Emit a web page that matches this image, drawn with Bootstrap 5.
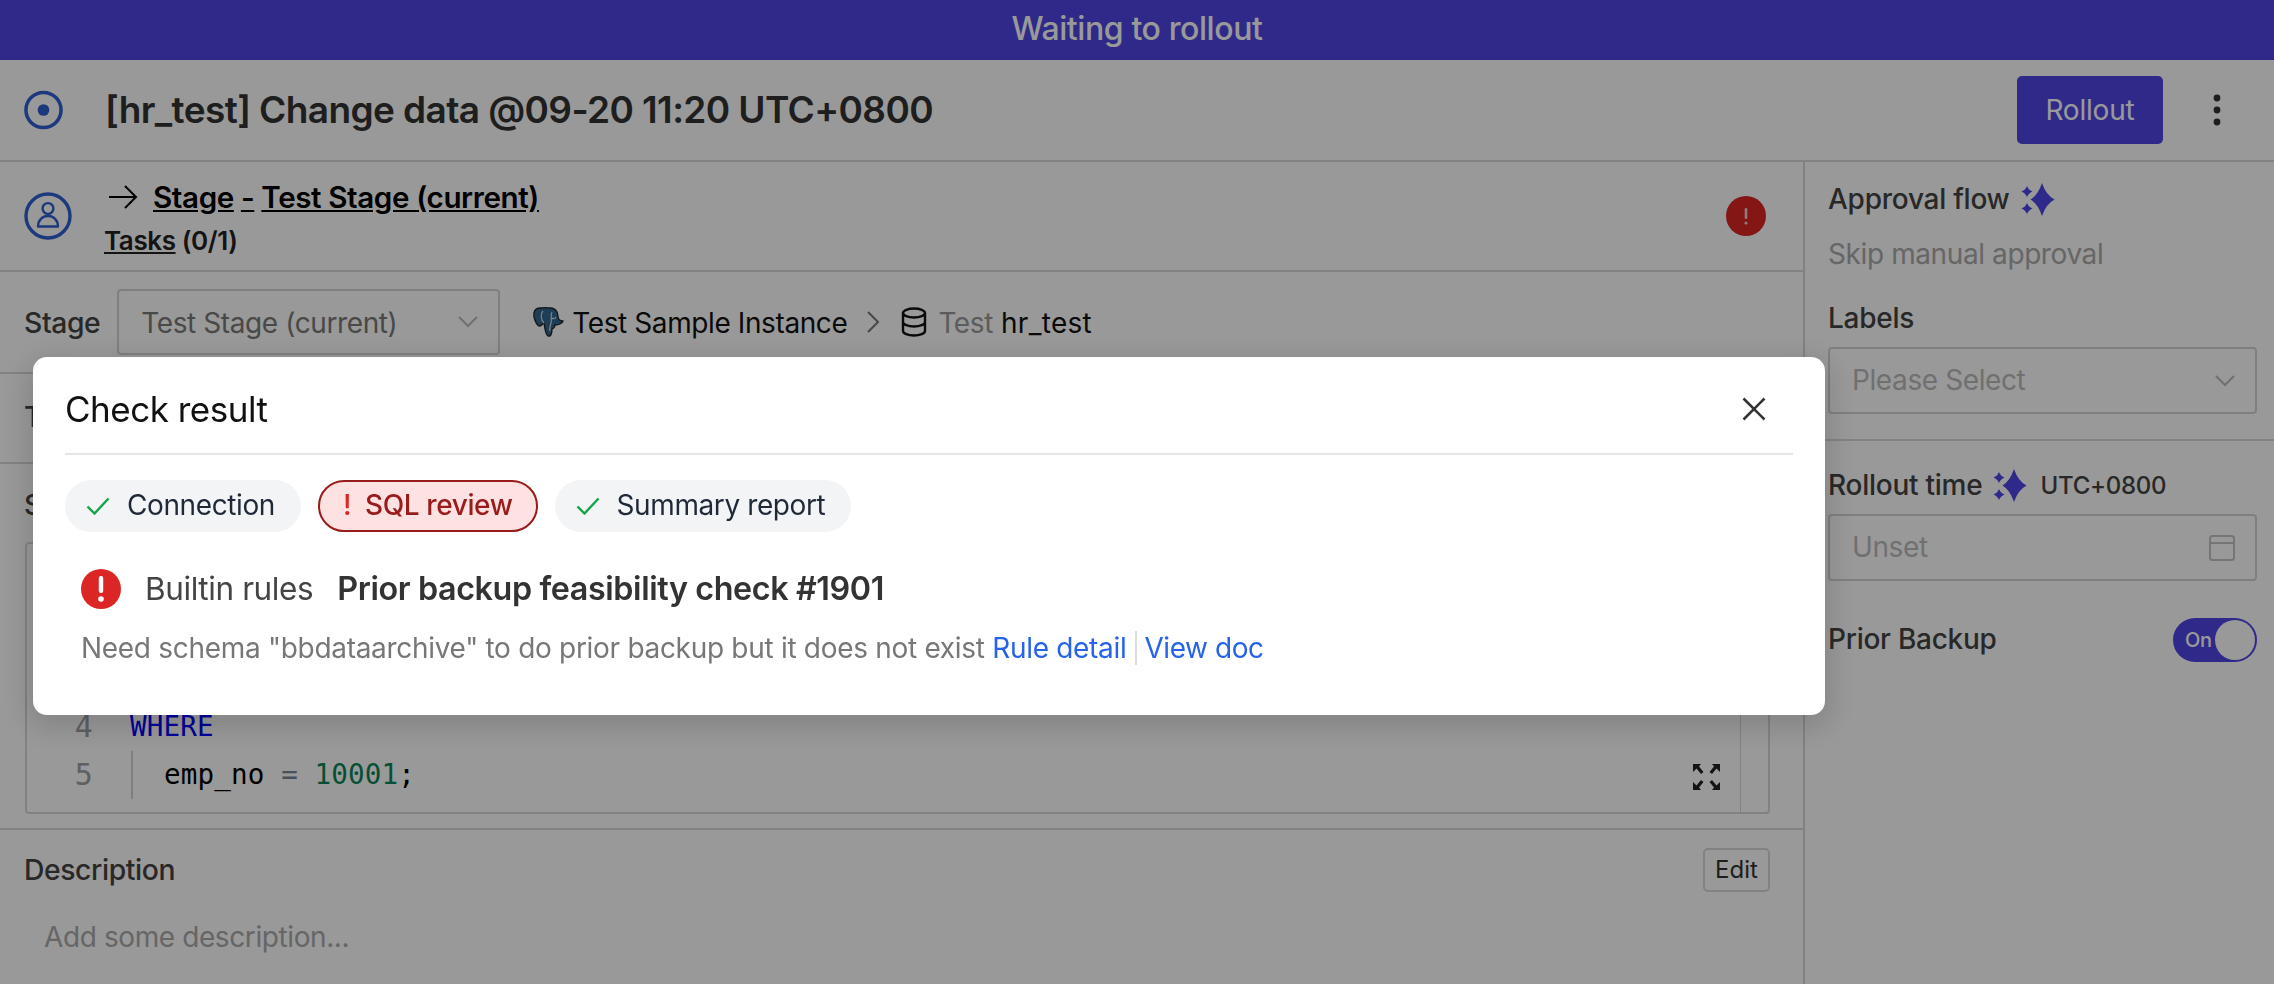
<!DOCTYPE html>
<html lang="en">
<head>
<meta charset="utf-8">
<title>Check result</title>
<link href="https://cdn.jsdelivr.net/npm/bootstrap@5.3.0/dist/css/bootstrap.min.css" rel="stylesheet">
<style>
html,body{height:100%;}
body{font-family:Inter,"Liberation Sans",sans-serif;font-size:28px;letter-spacing:-.4px;color:#3a3a3a;background:#fff;overflow:hidden;line-height:1.4;}
.shell{height:984px;}
.rollout-banner{height:60px;background:#4f46e5;color:#fff;font-size:32px;font-weight:500;padding-bottom:2px;}
.issue-head{height:102px;padding:0 45px 0 24px;border-bottom:2px solid #d9d9d9;}
.issue-title{font-size:37px;font-weight:600;letter-spacing:-.6px;margin:0 0 0 42px;color:#333;white-space:nowrap;}
.btn-rollout{width:146px;height:68px;background:#4f46e5;color:#fff;font-size:28px;letter-spacing:-.2px;border:0;border-radius:5px;padding:0;}
.btn-rollout:hover{background:#4f46e5;color:#fff;}
.dots-wrap{margin:0 0 0 42px;width:24px;}
.main-col{width:1803px;flex:none;}
.side-col{border-left:2px solid #d9d9d9;flex:1;padding:0 17px 0 23px;}
.row-stage{height:110px;padding:0 37px 0 24px;border-bottom:2px solid #d9d9d9;}
.stage-title{font-size:29.6px;font-weight:600;color:#000;line-height:38px;margin-left:4px;gap:15px;}
.stage-title a{color:#000;}
.stage-tasks{font-size:26px;font-weight:600;color:#222;line-height:38px;margin-top:6px;}
.stage-tasks a{color:#222;}
.stage-body{margin-left:32px;margin-top:6px;}
.row-picker{height:102px;padding:0 24px;border-bottom:2px solid #d9d9d9;}
.row-picker span{padding-top:3px;}
.field-label{font-weight:500;color:#444;font-size:28.300px;}
.picker-box{width:383px;height:66px;border:2px solid #d1d5db;border-radius:4px;padding:0 20px 0 22px;color:#7a7a7a;background:#fff;margin:0 32px 0 17px;}
.picker-box.wide{width:100%;margin:0;height:67px;color:#bbb;}
.instance-name{color:#111;margin-left:8px;}
.crumb-sep{margin:0 21px 0 19px;}
.muted-word{color:#999;margin-left:11px;}
.dark-word{color:#111;margin-left:8px;letter-spacing:.3px;}
.row-tasks{height:90px;padding:0 24px;border-bottom:2px solid #d9d9d9;}
.row-statement{height:366px;padding:22px 33px 0 24px;border-bottom:2px solid #d9d9d9;}
.code-box{height:272px;margin:16px 0 0 1px;border:2px solid #d9d9d9;border-radius:4px;padding-top:15px;}
.code-line{height:48px;font-family:"DejaVu Sans Mono","Liberation Mono",monospace;font-size:27.6px;letter-spacing:.12px;color:#000;line-height:48px;}
.line-no{width:103px;flex:none;text-align:right;padding-right:37px;color:#a0a0a0;font-size:30px;}
.line-code{white-space:pre;}
.line-indent{border-left:2px solid #d4d4d4;padding-left:31px;margin-left:1px;}
.kw{color:#0000ff;}.num{color:#098658;}.op{color:#778899;}
.code-rail{width:28px;border-left:1px solid #d9d9d9;flex:none;}
.code-area{min-width:0;}
.expand-icon{position:absolute;right:48px;bottom:22px;}
.row-desc{padding:18px 33px 0 24px;}
.row-desc .field-label{padding-top:1px;}
.btn-edit{width:67px;height:44px;font-size:24px;border:2px solid #d9d9d9;border-radius:5px;color:#333;padding:0;background:#fff;}
.desc-empty{color:#aaa;padding-left:20px;margin-top:26px;}
.side-title{font-weight:500;color:#444;letter-spacing:-.25px;gap:11px;}
.side-muted{color:#aaa;}
.side-hr{border-bottom:2px solid #d9d9d9;margin:0 -17px 0 -23px;}
.tz{font-size:24px;color:#444;margin-left:2px;}
.toggle-on{width:84px;height:44px;border-radius:22px;background:#4f46e5;color:#fff;font-size:20px;padding:2px 2px 2px 12px;}
.toggle-knob{width:40px;height:40px;border-radius:50%;background:#fff;}
.dim-layer{position:fixed;inset:0;background:rgba(0,0,0,.4);}
.check-dialog{position:absolute;left:33px;top:357px;width:1792px;height:358px;background:#fff;border-radius:14px;box-shadow:0 8px 30px 6px rgba(0,0,0,.14);padding:0 32px;}
.dialog-head{height:98px;border-bottom:2px solid #e5e5e5;color:#111;font-size:35px;letter-spacing:-.5px;padding:8px 27px 0 0;}
.check-tabs{margin-top:25px;gap:17px;}
.check-tab{height:52px;border-radius:26px;background:#f3f4f6;color:#1f2937;padding:0 26px 0 21px;font-size:28px;font-weight:400;}
.check-tab.is-error{background:#fee2e2;color:#991b1b;border:2px solid #991b1b;font-weight:500;padding:0 23px 0 23px;}
.bang{margin-right:14px;font-weight:500;color:#dc2626;}
.tick{margin-right:17px;}
.result-block{padding:0 16px;margin-top:34px;}
.result-kind{font-size:31.500px;margin-left:24px;color:#444;}
.result-name{font-size:32.300px;font-weight:600;margin-left:24px;color:#333;}
.result-text{color:#777;font-size:28px;letter-spacing:-.3px;margin-top:18px;line-height:38px;white-space:nowrap;}
.result-text a{color:#2563eb;text-decoration:none;}
.link-rule{border-left:2px solid #ddd;padding-left:8px;margin-left:8px;letter-spacing:-.45px;}
</style>
</head>
<body>
<div class="shell d-flex flex-column">
  <div class="rollout-banner d-flex align-items-center justify-content-center">Waiting to rollout</div>
  <div class="issue-head d-flex align-items-center">
    <svg width="39" height="40" viewBox="0 0 40 40" fill="none"><circle cx="20" cy="20" r="18" stroke="#2f5fd0" stroke-width="3.6"/><circle cx="20" cy="20" r="6" fill="#2f5fd0"/></svg>
    <h1 class="issue-title flex-grow-1">[hr_test] Change data @09-20 11:20 UTC+0800</h1>
    <button class="btn btn-rollout" type="button">Rollout</button>
    <div class="dots-wrap d-flex justify-content-center"><svg width="10" height="32" viewBox="0 0 10 32"><circle cx="5" cy="4" r="3.4" fill="#333"/><circle cx="5" cy="16" r="3.4" fill="#333"/><circle cx="5" cy="28" r="3.4" fill="#333"/></svg></div>
  </div>
  <div class="d-flex flex-grow-1">
    <div class="main-col">
      <div class="row-stage d-flex align-items-center">
        <svg width="48" height="48" viewBox="0 0 48 48" fill="none"><circle cx="24" cy="24" r="22" stroke="#2f5fd0" stroke-width="3.4"/><circle cx="24" cy="16.5" r="5.4" stroke="#2f5fd0" stroke-width="2.4"/><path d="M14 34.5c0-6.5 4.500-10.500 10-10.500s10 4 10 10.500z" stroke="#2f5fd0" stroke-width="2.4" stroke-linejoin="round"/></svg>
        <div class="stage-body flex-grow-1">
          <div class="stage-title d-flex align-items-center">
            <svg width="30" height="26" viewBox="0 0 30 26" fill="none"><path d="M1 13h27M17 2l11 11-11 11" stroke="#000" stroke-width="2"/></svg>
            <span><a href="#">Stage</a> <a href="#">-</a> <a href="#">Test Stage (current)</a></span>
          </div>
          <div class="stage-tasks"><a href="#">Tasks</a> (0/1)</div>
        </div>
        <svg width="40" height="40" viewBox="0 0 40 40"><circle cx="20" cy="20" r="20" fill="#dc2626"/><rect x="18.700" y="12" width="2.600" height="11" rx="1.300" fill="#f8c9c9"/><circle cx="20" cy="27" r="1.600" fill="#f8c9c9"/></svg>
      </div>
      <div class="row-picker d-flex align-items-center">
        <span class="field-label">Stage</span>
        <div class="picker-box d-flex align-items-center justify-content-between">
          <span>Test Stage (current)</span>
          <svg width="20" height="12" viewBox="0 0 20 12" fill="none"><path d="M1 1l9 9 9-9" stroke="#bbb" stroke-width="2"/></svg>
        </div>
        <svg width="32" height="32" viewBox="0 0 32 32"><path d="M8 2C3 2 1 6 2 11c1 4 3 9 6 9 2 0 3-3 4-3 1 5 1 11 4 13 3 1 4-3 4-7 2-1 3-3 3-4 4 0 8-2 8-4-4 0-5-2-5-5 0-5-4-9-9-8-3-1-6 0-9 0z" fill="#336791" stroke="#222" stroke-width="1.300"/><path d="M11 5c-3 3-2 9 1 12M20 6c-2 3 0 7-1 11s-2 5-1 8M24 11c-1 2-3 2-4 1" fill="none" stroke="#cfe0ee" stroke-width="1.200"/></svg>
        <span class="instance-name">Test Sample Instance</span>
        <svg class="crumb-sep" width="14" height="24" viewBox="0 0 14 24" fill="none"><path d="M2 2l10 10L2 22" stroke="#777" stroke-width="2"/></svg>
        <svg width="26" height="30" viewBox="0 0 26 30" fill="none"><ellipse cx="13" cy="6" rx="11" ry="4.500" stroke="#111" stroke-width="2.400"/><path d="M2 6v18c0 2.500 5 4.500 11 4.500s11-2 11-4.500V6M2 15c0 2.500 5 4.500 11 4.500s11-2 11-4.500" stroke="#111" stroke-width="2.400"/></svg>
        <span class="muted-word">Test</span><span class="dark-word">hr_test</span>
      </div>
      <div class="row-tasks d-flex align-items-center"><span class="field-label">T</span></div>
      <div class="row-statement">
        <div class="field-label">S</div>
        <div class="code-box d-flex position-relative">
          <div class="code-area flex-grow-1">
            <div class="code-line"></div>
            <div class="code-line"></div>
            <div class="code-line"></div>
            <div class="code-line d-flex"><span class="line-no">4</span><span class="line-code kw">WHERE</span></div>
            <div class="code-line d-flex"><span class="line-no">5</span><span class="line-code line-indent">emp_no <span class="op">=</span> <span class="num">10001</span>;</span></div>
          </div>
          <div class="code-rail"></div>
          <svg class="expand-icon" width="27" height="26" viewBox="0 0 27 26" fill="#222"><path d="M0 0h8L6 2.500 10.500 8 8 10 3.500 4.500 0 8zM27 0h-8l2 2.500L16.500 8 19 10l4.500-5.500L27 8zM0 26h8l-2-2.500L10.500 18 8 16l-4.500 5.500L0 18zM27 26h-8l2-2.500L16.500 18 19 16l4.500 5.500L27 18z"/></svg>
        </div>
      </div>
      <div class="row-desc">
        <div class="d-flex align-items-center justify-content-between">
          <span class="field-label">Description</span>
          <button class="btn btn-edit" type="button">Edit</button>
        </div>
        <div class="desc-empty">Add some description...</div>
      </div>
    </div>
    <div class="side-col">
      <div class="d-flex align-items-center side-title" style="margin-top:19px;height:38px">Approval flow
        <svg width="34" height="34" viewBox="0 0 34 34" fill="#4f46e5"><path d="M21 0Q25 12 33.500 16.500Q25 21 21 33Q17 21 9.500 16.500Q17 12 21 0z"/><path d="M6 3Q7.500 7 11.500 8.500Q7.500 10 6 14Q4.500 10 .5 8.500Q4.500 7 6 3zM6 20Q7.500 24 11.500 25.500Q7.500 27 6 31Q4.500 27 .5 25.500Q4.500 24 6 20z"/></svg>
      </div>
      <div class="side-muted" style="margin-top:16px;line-height:38px">Skip manual approval</div>
      <div class="side-title" style="margin-top:26px;line-height:38px">Labels</div>
      <div class="picker-box wide d-flex align-items-center justify-content-between" style="margin-top:10px">
        <span>Please Select</span>
        <svg width="20" height="12" viewBox="0 0 20 12" fill="none"><path d="M1 1l9 9 9-9" stroke="#bbb" stroke-width="2"/></svg>
      </div>
      <div class="side-hr" style="margin-top:25px"></div>
      <div class="d-flex align-items-center side-title" style="margin-top:26px;height:38px">Rollout time
        <svg width="34" height="34" viewBox="0 0 34 34" fill="#4f46e5"><path d="M21 0Q25 12 33.500 16.500Q25 21 21 33Q17 21 9.500 16.500Q17 12 21 0z"/><path d="M6 3Q7.500 7 11.500 8.500Q7.500 10 6 14Q4.500 10 .5 8.500Q4.500 7 6 3zM6 20Q7.500 24 11.500 25.500Q7.500 27 6 31Q4.500 27 .5 25.500Q4.500 24 6 20z"/></svg>
        <span class="tz">UTC+0800</span>
      </div>
      <div class="picker-box wide d-flex align-items-center justify-content-between" style="margin-top:9px">
        <span>Unset</span>
        <svg width="26" height="26" viewBox="0 0 26 26" fill="none"><rect x="1" y="1" width="24" height="24" rx="2.500" stroke="#c4c4c4" stroke-width="2"/><path d="M1 8h24" stroke="#c4c4c4" stroke-width="2"/></svg>
      </div>
      <div class="d-flex align-items-center justify-content-between side-title" style="margin-top:37px;height:44px">
        <span>Prior Backup</span>
        <span class="toggle-on d-flex align-items-center justify-content-between"><span>On</span><span class="toggle-knob"></span></span>
      </div>
    </div>
  </div>
</div>
<div class="dim-layer">
  <div class="check-dialog">
    <div class="dialog-head d-flex align-items-center justify-content-between">
      <span>Check result</span>
      <svg width="24" height="24" viewBox="0 0 24 24" fill="none"><path d="M1.500 1.500l21 21M22.500 1.500l-21 21" stroke="#333" stroke-width="2.600"/></svg>
    </div>
    <div class="check-tabs d-flex">
      <div class="check-tab d-flex align-items-center"><svg class="tick" width="24" height="18" viewBox="0 0 24 18" fill="none"><path d="M1.500 9.500l7 7L22.500 1.500" stroke="#16a34a" stroke-width="2.400"/></svg>Connection</div>
      <div class="check-tab is-error d-flex align-items-center"><span class="bang">!</span>SQL review</div>
      <div class="check-tab d-flex align-items-center"><svg class="tick" width="24" height="18" viewBox="0 0 24 18" fill="none"><path d="M1.500 9.500l7 7L22.500 1.500" stroke="#16a34a" stroke-width="2.400"/></svg>Summary report</div>
    </div>
    <div class="result-block">
      <div class="d-flex align-items-center">
        <svg width="40" height="40" viewBox="0 0 40 40"><circle cx="20" cy="20" r="20" fill="#dc2626"/><rect x="17.800" y="7" width="4.400" height="17" rx="2" fill="#fff"/><circle cx="20" cy="30" r="2.800" fill="#fff"/></svg>
        <span class="result-kind">Builtin rules</span>
        <span class="result-name">Prior backup feasibility check #1901</span>
      </div>
      <div class="result-text">Need schema "bbdataarchive" to do prior backup but it does not exist <a href="#">Rule detail</a><a href="#" class="link-rule">View doc</a></div>
    </div>
  </div>
</div>
<script src="https://cdn.jsdelivr.net/npm/bootstrap@5.3.0/dist/js/bootstrap.bundle.min.js"></script>
</body>
</html>
